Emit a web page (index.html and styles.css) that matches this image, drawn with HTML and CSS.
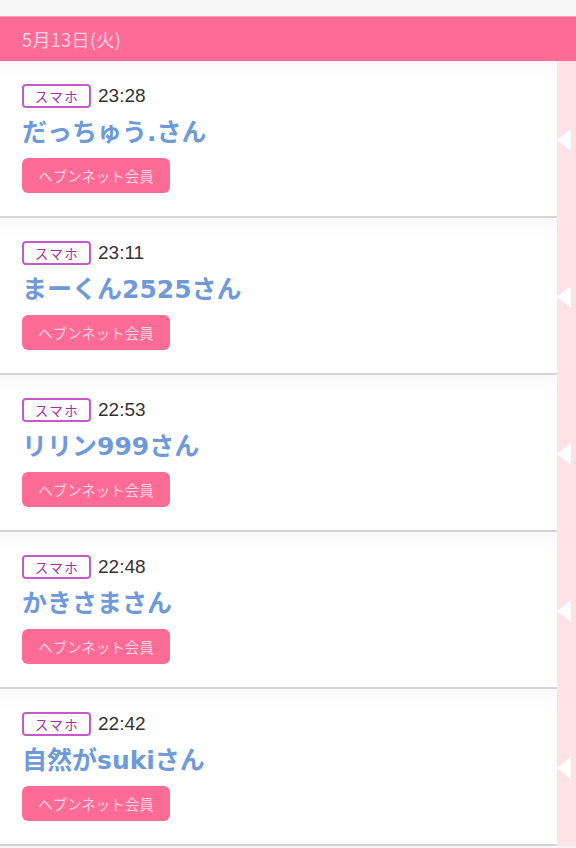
FILE: index.html
```html
<!DOCTYPE html>
<html lang="ja">
<head>
<meta charset="utf-8">
<link rel="stylesheet" href="styles.css">
</head>
<body>
<div class="page">
  <div class="date-bar">5月13日(火)</div>
  <ul class="list">
    <li class="entry">
      <div class="entry-body">
        <div class="meta"><span class="device">スマホ</span><span class="time">23:28</span></div>
        <div class="name">だっちゅう.さん</div>
        <span class="member">ヘブンネット会員</span>
      </div>
      <div class="entry-side"><span class="notch"></span></div>
    </li>
    <li class="entry">
      <div class="entry-body">
        <div class="meta"><span class="device">スマホ</span><span class="time">23:11</span></div>
        <div class="name">まーくん2525さん</div>
        <span class="member">ヘブンネット会員</span>
      </div>
      <div class="entry-side"><span class="notch"></span></div>
    </li>
    <li class="entry">
      <div class="entry-body">
        <div class="meta"><span class="device">スマホ</span><span class="time">22:53</span></div>
        <div class="name">リリン999さん</div>
        <span class="member">ヘブンネット会員</span>
      </div>
      <div class="entry-side"><span class="notch"></span></div>
    </li>
    <li class="entry">
      <div class="entry-body">
        <div class="meta"><span class="device">スマホ</span><span class="time">22:48</span></div>
        <div class="name">かきさまさん</div>
        <span class="member">ヘブンネット会員</span>
      </div>
      <div class="entry-side"><span class="notch"></span></div>
    </li>
    <li class="entry">
      <div class="entry-body">
        <div class="meta"><span class="device">スマホ</span><span class="time">22:42</span></div>
        <div class="name">自然がsukiさん</div>
        <span class="member">ヘブンネット会員</span>
      </div>
      <div class="entry-side"><span class="notch"></span></div>
    </li>
  </ul>
</div>
</body>
</html>
```
FILE: styles.css
```css
* { box-sizing: border-box; }
html, body { margin: 0; padding: 0; }
body {
  background: #f6f6f6;
  font-family: "Noto Sans", "Noto Sans CJK JP", sans-serif;
  width: 576px;
  height: 848px;
  overflow: hidden;
}
.page { padding-top: 16px; }
.date-bar {
  height: 45px;
  background: #ff6b97;
  color: #ffd3e1;
  font-size: 18px;
  letter-spacing: 0.4px;
  line-height: 44px;
  padding-left: 22px;
  font-family: "Noto Sans CJK JP", sans-serif;
  border-top: 1px solid #ff9ab8;
}
.list { list-style: none; margin: 0; padding: 0; background: #fff; }
.entry { display: flex; height: 157px; }
.entry-body {
  flex: 1;
  background: linear-gradient(#f8f8f8 0, #fdfdfd 12px, #fff 22px);
  border-bottom: 2px solid #d4d4d4;
  padding: 23px 0 0 22px;
  display: flex;
  flex-direction: column;
  align-items: flex-start;
}
.meta { display: flex; align-items: center; height: 24px; }
.device {
  display: inline-flex;
  align-items: center;
  justify-content: center;
  width: 69px;
  height: 24px;
  border: 2px solid #c55bc9;
  border-radius: 4px;
  color: #a0339f;
  font-size: 13.5px;
  letter-spacing: 1.5px;
  padding-left: 1px;
  font-family: "Noto Sans CJK JP", sans-serif;
  background: #fff;
}
.time {
  margin-left: 7px;
  font-family: "Liberation Sans", Arial, sans-serif;
  font-size: 19px;
  color: #333;
}
.name {
  margin-top: 8px;
  height: 34px;
  line-height: 34px;
  font-size: 25px;
  font-weight: bold;
  color: #6e9ad9;
  font-family: "DejaVu Sans", "Noto Sans CJK JP", sans-serif;
}
.member {
  margin-top: 8px;
  display: inline-flex;
  align-items: center;
  justify-content: center;
  width: 148px;
  height: 35px;
  background: #ff6b97;
  border-radius: 6px;
  color: #ffd3e1;
  font-size: 14.5px;
  font-family: "Noto Sans CJK JP", sans-serif;
}
.entry-side {
  width: 19px;
  background: #ffe1e6;
  display: flex;
  align-items: center;
}
.notch {
  width: 0;
  height: 0;
  border-right: 14px solid #fff;
  border-top: 11px solid transparent;
  border-bottom: 11px solid transparent;
}
```
